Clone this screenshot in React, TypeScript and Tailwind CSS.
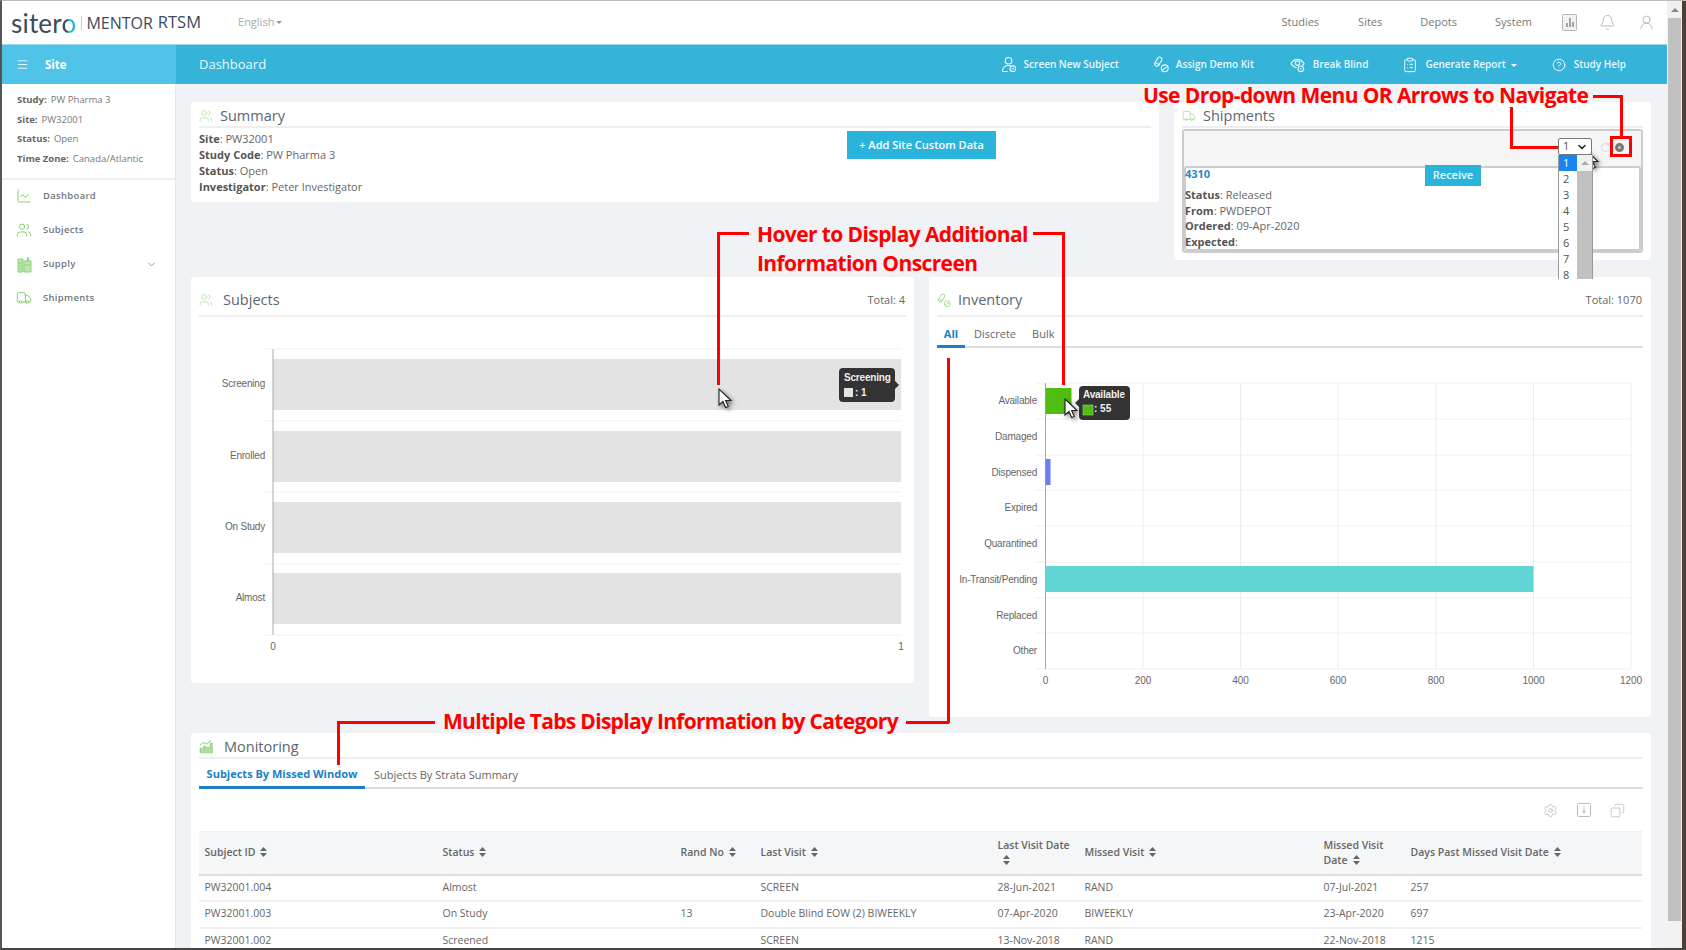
import { Bell, ChartLine, ChevronDown, CircleHelp, ClipboardList, Copy, Menu, Settings, Truck, UserRound, Users } from "lucide-react";

const NAV_TOP = [
  { label: "Studies", cls: "ml-0" },
  { label: "Sites", cls: "ml-[39px]" },
  { label: "Depots", cls: "ml-[38px]" },
  { label: "System", cls: "ml-[38px]" },
];

const SIDE_INFO = [
  ["Study:", "PW Pharma 3"],
  ["Site:", "PW32001"],
  ["Status:", "Open"],
  ["Time Zone:", "Canada/Atlantic"],
];

const SUMMARY = [
  ["Site", "PW32001"],
  ["Study Code", "PW Pharma 3"],
  ["Status", "Open"],
  ["Investigator", "Peter Investigator"],
];

const SHIPMENT = [
  ["Status", "Released"],
  ["From", "PWDEPOT"],
  ["Ordered", "09-Apr-2020"],
  ["Expected", ""],
];

const COLUMNS = [
  { label: "Subject ID", width: "w-[238px]" },
  { label: "Status", width: "w-[238px]" },
  { label: "Rand No", width: "w-[80px]" },
  { label: "Last Visit", width: "w-[237px]" },
  { label: "Last Visit Date", width: "w-[87px]" },
  { label: "Missed Visit", width: "w-[239px]" },
  { label: "Missed Visit Date", width: "w-[87px]" },
  { label: "Days Past Missed Visit Date", width: "w-[237px]" },
];

const ROWS = [
  ["PW32001.004", "Almost", "", "SCREEN", "28-Jun-2021", "RAND", "07-Jul-2021", "257"],
  ["PW32001.003", "On Study", "13", "Double Blind EOW (2) BIWEEKLY", "07-Apr-2020", "BIWEEKLY", "23-Apr-2020", "697"],
  ["PW32001.002", "Screened", "", "SCREEN", "13-Nov-2018", "RAND", "22-Nov-2018", "1215"],
];

const SUBJECT_ROWS = [
  { label: "Screening", top: 359 },
  { label: "Enrolled", top: 431 },
  { label: "On Study", top: 502 },
  { label: "Almost", top: 573 },
];

const INVENTORY_LABELS = ["Available", "Damaged", "Dispensed", "Expired", "Quarantined", "In-Transit/Pending", "Replaced", "Other"];

function SupplyIcon() {
  return (
    <svg width="15" height="17" viewBox="0 0 15 17" className="shrink-0">
      <path d="M1 3h5v13H1zM7 5h7v11H7z" fill="#bfe6b0" stroke="#8ed279" />
      <path d="M10 5l1-4 1 4M2 7h3M2 10h3M2 13h3M8 9h5" stroke="#8ed279" fill="none" />
    </svg>
  );
}

function ReportIcon() {
  return (
    <svg width="15" height="17" viewBox="0 0 15 17">
      <rect x="0.5" y="0.5" width="14" height="16" rx="1" fill="#f1f1f1" stroke="#b5b5b5" />
      <path d="M4 13V9h2v4zM7 13V4h2v9zM10 13V8h2v5z" fill="#a5a5a5" />
    </svg>
  );
}

function BarsIcon() {
  return (
    <svg width="14" height="14" viewBox="0 0 14 14">
      <path d="M1 13V8h2.4v5zM4.4 13V6h2.4v7zM7.8 13V7h2.4v6zM11 13V3h2.4v10z" fill="#a9d99a" stroke="#8ec97c" strokeWidth="0.5" />
      <path d="M1 5l3.5-2.5L7.5 4 12 0.8" stroke="#8ec97c" fill="none" />
    </svg>
  );
}

function SubjectBadgeIcon() {
  return (
    <svg width="17" height="17" viewBox="0 0 17 17" fill="none" stroke="currentColor" strokeWidth="1.2">
      <circle cx="8" cy="4.5" r="3.5" />
      <path d="M7 16H2.5c-.8 0-1.2-.5-1-1.3C2.2 11.5 4.5 9.5 8 9.5c1.3 0 2.4.3 3.3.8" />
      <circle cx="12.5" cy="13" r="3" />
      <path d="M11.2 13h2.6" />
    </svg>
  );
}

function KitIcon({ size, className }: { size: number; className?: string }) {
  return (
    <svg width={size} height={size} viewBox="0 0 17 17" fill="none" stroke="currentColor" strokeWidth="1.2" className={className}>
      <rect x="3.2" y="0.2" width="4.6" height="10.5" rx="2.3" transform="rotate(32 5.5 5.5)" />
      <path d="M3 6.6l4.4 2.7" />
      <circle cx="12.5" cy="12.5" r="3.6" />
      <path d="M10.2 14l4.6-3" />
    </svg>
  );
}

function BlindIcon() {
  return (
    <svg width="17" height="16" viewBox="0 0 17 16" fill="none" stroke="currentColor" strokeWidth="1.2">
      <path d="M1 6.5C3 3.5 5.5 2 8 2s5 1.5 7 4.5c-.6.9-1.3 1.7-2 2.3" />
      <path d="M1 6.5c1.6 2.4 3.6 3.9 6 4.4" />
      <circle cx="8" cy="6" r="2.4" />
      <circle cx="11.5" cy="12" r="3" />
      <path d="M10.4 12h2.2" />
    </svg>
  );
}

function SortIcon() {
  return (
    <svg width="7" height="10" viewBox="0 0 7 10" className="ml-[5px] inline-block align-[-1px]">
      <path d="M3.5 0L7 4H0zM3.5 10L0 6h7z" fill="#666" />
    </svg>
  );
}

function Cursor({ className }: { className: string }) {
  return (
    <svg width="15" height="22" viewBox="0 0 15 22" className={`absolute drop-shadow-[2px_2px_2px_rgba(0,0,0,0.5)] ${className}`}>
      <path d="M1 1v16l4-3.5 2.6 6 2.6-1.1-2.6-5.9H13z" fill="#fff" stroke="#222" strokeWidth="1.1" />
    </svg>
  );
}

function BarItem({ icon, label, caret, className }: { icon: React.ReactNode; label: string; caret?: boolean; className: string }) {
  return (
    <div className={`flex items-center text-[10px] font-semibold text-[#e9f8fd] ${className}`}>
      <span className="mr-[7px] flex w-[16px] justify-center">{icon}</span>
      {label}
      {caret && <span className="ml-[5px] mt-[2px] border-x-[3px] border-t-[3px] border-x-transparent border-t-white" />}
    </div>
  );
}

function PanelHeading({ icon, title, gap }: { icon: React.ReactNode; title: string; gap: string }) {
  return (
    <div className="flex items-center">
      <span className="flex w-[14px] justify-center">{icon}</span>
      <span className={`text-[14.5px] leading-[20px] text-[#5c6670] ${gap}`}>{title}</span>
    </div>
  );
}

function SubjectsChart() {
  return (
    <svg width="723" height="366" viewBox="191 317 723 366" className="block font-['Liberation_Sans',sans-serif]">
      {[349, 421, 492, 564, 635].map((y) => (
        <line key={y} x1="264" x2="901" y1={y} y2={y} stroke="#f1f1f1" />
      ))}
      {SUBJECT_ROWS.map((row) => (
        <g key={row.label}>
          <rect x="273" y={row.top} width="628" height="51" fill="#e3e3e3" />
          <text x="265" y={row.top + 28} textAnchor="end" fontSize="10" letterSpacing="-0.2" fill="#666">{row.label}</text>
        </g>
      ))}
      <line x1="273" x2="273" y1="349" y2="635" stroke="#aaa" />
      <text x="273" y="650" textAnchor="middle" fontSize="10" fill="#666">0</text>
      <text x="901" y="650" textAnchor="middle" fontSize="10" fill="#666">1</text>
      <rect x="839" y="368" width="56" height="34" rx="4" fill="#333" />
      <path d="M895 381l4 4-4 4z" fill="#333" />
      <text x="844" y="381" fontSize="10" letterSpacing="-0.2" fontWeight="700" fill="#eee">Screening</text>
      <rect x="844" y="388" width="9" height="9" fill="#e3e3e3" />
      <text x="855" y="396" fontSize="10" fontWeight="700" fill="#eee">: 1</text>
    </svg>
  );
}

function InventoryChart() {
  const rowY = [383, 419, 455, 490, 526, 562, 598, 633, 669];
  const tickX = [1045.5, 1143, 1240.6, 1338, 1436, 1533.5, 1631];
  return (
    <svg width="722" height="369" viewBox="929 348 722 369" className="block font-['Liberation_Sans',sans-serif]">
      {rowY.map((y) => (
        <line key={y} x1="1036" x2="1631" y1={y} y2={y} stroke="#f0f0f0" />
      ))}
      {tickX.map((x, i) => (
        <g key={x}>
          <line x1={x} x2={x} y1="383" y2="669" stroke={i === 0 ? "#aaa" : "#ececec"} />
          <text x={x} y="684" textAnchor="middle" fontSize="10" fill="#666">{i * 200}</text>
        </g>
      ))}
      {INVENTORY_LABELS.map((label, i) => (
        <text key={label} x="1037" y={rowY[i] + 21} textAnchor="end" fontSize="10" letterSpacing="-0.2" fill="#666">{label}</text>
      ))}
      <rect x="1045.5" y="388" width="26" height="26" fill="#4fbe10" />
      <rect x="1045.5" y="459" width="5" height="26" fill="#6b7ef0" />
      <rect x="1045.5" y="566" width="488" height="26" fill="#62d5d5" />
      <rect x="1079" y="386" width="51" height="34" rx="4" fill="#333" />
      <path d="M1079 399l-4 4 4 4z" fill="#333" />
      <text x="1083" y="398" fontSize="10" letterSpacing="-0.2" fontWeight="700" fill="#eee">Available</text>
      <rect x="1083" y="405" width="10" height="10" fill="#4fbe10" stroke="#8be060" strokeWidth="0.6" />
      <text x="1094" y="412" fontSize="10" fontWeight="700" fill="#eee">: 55</text>
    </svg>
  );
}

function Annotations() {
  return (
    <div className="pointer-events-none absolute -left-[2px] -top-[1px] h-[950px] w-[1686px] font-['Open_Sans',sans-serif] text-[21px] font-bold tracking-[-0.6px] text-[#f00]">
      <span className="absolute left-[1143px] top-[80px] whitespace-nowrap">Use Drop-down Menu OR Arrows to Navigate</span>
      <div className="absolute left-[1593px] top-[95px] h-[2.5px] w-[29px] bg-[#f00]" />
      <div className="absolute left-[1620px] top-[95px] h-[41px] w-[2.5px] bg-[#f00]" />
      <div className="absolute left-[1610px] top-[136px] h-[21px] w-[22px] border-[3px] border-[#f00]" />
      <div className="absolute left-[1510px] top-[107px] h-[41px] w-[2.5px] bg-[#f00]" />
      <div className="absolute left-[1510px] top-[146px] h-[2.5px] w-[48px] bg-[#f00]" />

      <span className="absolute left-[757px] top-[219px] whitespace-nowrap">Hover to Display Additional</span>
      <span className="absolute left-[757px] top-[248px] whitespace-nowrap">Information Onscreen</span>
      <div className="absolute left-[717px] top-[232px] h-[2.5px] w-[32px] bg-[#f00]" />
      <div className="absolute left-[717px] top-[232px] h-[153px] w-[2.5px] bg-[#f00]" />
      <div className="absolute left-[1033px] top-[232px] h-[2.5px] w-[31px] bg-[#f00]" />
      <div className="absolute left-[1062px] top-[232px] h-[153px] w-[2.5px] bg-[#f00]" />

      <span className="absolute left-[443px] top-[706px] whitespace-nowrap tracking-[-0.7px]">Multiple Tabs Display Information by Category</span>
      <div className="absolute left-[338px] top-[721px] h-[2.5px] w-[97px] bg-[#f00]" />
      <div className="absolute left-[337px] top-[721px] h-[44px] w-[2.5px] bg-[#f00]" />
      <div className="absolute left-[906px] top-[721px] h-[2.5px] w-[43px] bg-[#f00]" />
      <div className="absolute left-[947px] top-[358px] h-[365px] w-[2.5px] bg-[#f00]" />

      <Cursor className="left-[718px] top-[388px]" />
      <Cursor className="left-[1064px] top-[398px]" />
      <Cursor className="left-[1585px] top-[149px]" />
    </div>
  );
}

export default function App() {
  return (
    <div className="relative flex h-[950px] w-[1686px] overflow-hidden border-t border-b-2 border-l-2 border-t-[#bbb] border-b-[#444] border-l-[#555] bg-[#f0f2f5] font-['Open_Sans',sans-serif]">
      <div className="flex min-w-0 flex-1 flex-col">
        {/* Top header */}
        <header className="flex h-[44px] shrink-0 items-center border-b border-b-[#9ed7ea] bg-white pl-[9px]">
          <span className="font-['Lato',sans-serif] text-[26px] leading-none tracking-[0.2px] text-[#3d4b5c]">
            siter
            <span className="bg-[linear-gradient(90deg,#3d4b5c_45%,#2ab4dc_45%)] bg-clip-text text-transparent">o</span>
          </span>
          <span className="ml-[5px] h-[14px] w-px bg-[#ccc]" />
          <span className="ml-[4px] text-[16px] font-medium text-[#3d4b5c]">MENTOR</span>
          <span className="ml-[5px] text-[16.5px] text-[#3d4b5c]">RTSM</span>
          <span className="ml-[37px] flex items-center text-[11px] text-[#aaa]">
            English
            <span className="ml-[2px] border-x-[3px] border-t-[3px] border-x-transparent border-t-[#999]" />
          </span>
          <nav className="ml-auto flex items-center text-[11px] text-[#777]">
            {NAV_TOP.map((item) => (
              <span key={item.label} className={item.cls}>{item.label}</span>
            ))}
          </nav>
          <div className="ml-[30px] mr-[12px] flex items-center gap-[22px] text-[#b5b5b5]">
            <ReportIcon />
            <Bell size={17} strokeWidth={1.3} />
            <UserRound size={17} strokeWidth={1.3} />
          </div>
        </header>

        {/* Blue bar */}
        <div className="flex h-[39px] shrink-0 bg-[#35b3d8] text-white">
          <div className="flex w-[174px] shrink-0 items-center bg-[#4fc3e8] pl-[14px]">
            <Menu size={13} strokeWidth={2} className="text-[#dff5fc]" />
            <span className="ml-[16px] text-[11.5px] font-bold">Site</span>
          </div>
          <span className="ml-[23px] self-center text-[13px] text-[#e9f8fd]">Dashboard</span>
          <div className="ml-auto flex items-center pr-[41px]">
            <BarItem icon={<SubjectBadgeIcon />} label="Screen New Subject" className="mr-[34px]" />
            <BarItem icon={<KitIcon size={17} />} label="Assign Demo Kit" className="mr-[36px]" />
            <BarItem icon={<BlindIcon />} label="Break Blind" className="mr-[34px]" />
            <BarItem icon={<ClipboardList size={16} strokeWidth={1.5} />} label="Generate Report" caret className="mr-[34px]" />
            <BarItem icon={<CircleHelp size={14} strokeWidth={1.7} />} label="Study Help" className="" />
          </div>
        </div>

        <div className="flex min-h-0 flex-1">
          {/* Sidebar */}
          <aside className="w-[174px] shrink-0 border-r border-r-[#e8e8e8] bg-white">
            <div className="flex h-[96px] flex-col gap-[5px] border-b-2 border-b-[#eee] pl-[15px] pt-[9px] text-[9.5px] leading-[14.5px] text-[#777]">
              {SIDE_INFO.map(([label, value]) => (
                <div key={label}>
                  <span className="mr-[4px] font-bold text-[#666]">{label}</span>
                  {value}
                </div>
              ))}
            </div>
            <nav className="-mt-px pl-[14px] pr-[18px] text-[9.5px] font-semibold tracking-[0.3px] text-[#6f7780]">
              <div className="flex h-[34px] items-center gap-[11px]">
                <ChartLine size={16} strokeWidth={1.4} className="text-[#7fcb68]" />
                Dashboard
              </div>
              <div className="flex h-[34px] items-center gap-[11px]">
                <Users size={16} strokeWidth={1.4} className="text-[#7fcb68]" />
                Subjects
              </div>
              <div className="flex h-[34px] items-center gap-[11px]">
                <span className="flex w-[16px] justify-center"><SupplyIcon /></span>
                Supply
                <ChevronDown size={11} strokeWidth={2} className="ml-auto text-[#888]" />
              </div>
              <div className="flex h-[34px] items-center gap-[11px]">
                <Truck size={16} strokeWidth={1.4} className="text-[#7fcb68]" />
                Shipments
              </div>
            </nav>
          </aside>

          {/* Content */}
          <main className="min-w-0 flex-1 overflow-hidden pl-[15px] text-[11px] text-[#666]">
            <div className="flex h-[193px] items-start pt-[18px]">
              {/* Summary */}
              <section className="h-[100px] w-[968px] rounded-[3px] bg-white px-[8px]">
                <div className="flex h-[26px] items-end border-b-2 border-b-[#eee]">
                  <PanelHeading icon={<Users size={14} strokeWidth={1.2} className="text-[#a9d99a]" />} title="Summary" gap="ml-[7px]" />
                </div>
                <div className="relative">
                  <div className="pt-[3px] text-[11px] leading-[16px]">
                    {SUMMARY.map(([label, value]) => (
                      <div key={label}>
                        <b className="font-bold text-[#555]">{label}</b>: {value}
                      </div>
                    ))}
                  </div>
                  <button className="absolute left-[648px] top-[3px] flex h-[28px] w-[149px] items-center justify-center bg-[#2ab4dc] text-[11px] font-semibold text-white">
                    + Add Site Custom Data
                  </button>
                </div>
              </section>

              {/* Shipments */}
              <section className="relative ml-[15px] h-[158px] w-[477px] rounded-[3px] bg-white px-[8px]">
                <div className="flex h-[26px] items-end border-b-2 border-b-[#eee]">
                  <PanelHeading icon={<Truck size={14} strokeWidth={1.3} className="text-[#a9d99a]" />} title="Shipments" gap="ml-[7px]" />
                </div>
                <div className="mt-[1px] h-[124px] rounded-[3px] border-2 border-[#ccc] bg-[#f5f5f5]">
                  <div className="relative h-[35px]">
                    <span className="absolute left-[417px] top-[12px] size-[9px] rounded-full border border-[#ddd]" />
                    <span className="absolute left-[431px] top-[12px] size-[9px] rounded-full border-[3px] border-[#777] bg-[#ccc]" />
                  </div>
                  <div className="relative h-[85px] rounded-[3px] border-2 border-[#ccc] bg-white">
                    <div className="-ml-px -mt-[2px] text-[11px] font-bold leading-[16px] text-[#2a87c8]">4310</div>
                    <div className="-ml-px pt-[5px] leading-[15.7px]">
                      {SHIPMENT.map(([label, value]) => (
                        <div key={label}>
                          <b className="font-bold text-[#555]">{label}</b>: {value}
                        </div>
                      ))}
                    </div>
                    <button className="absolute left-[239px] top-[-3px] flex h-[21px] w-[56px] items-center justify-center bg-[#2ab4dc] text-[11px] font-semibold text-[#e9f8fd]">
                      Receive
                    </button>
                  </div>
                </div>
                {/* Open select */}
                <div className="absolute left-[384px] top-[36px] z-10 flex h-[17px] w-[34px] items-center justify-between rounded-[2px] border border-[#777] bg-white pl-[4px] pr-[3px] text-[11px] text-[#555]">
                  1
                  <ChevronDown size={12} strokeWidth={3} className="text-[#222]" />
                </div>
                <div className="absolute left-[384px] top-[53px] z-10 flex h-[124px] w-[35px] overflow-hidden border-x border-x-[#999] bg-white text-[11px] leading-[16px] text-[#555]">
                  <div className="w-[18px]">
                    {[1, 2, 3, 4, 5, 6, 7, 8].map((n) => (
                      <div key={n} className={n === 1 ? "h-[16px] bg-[#1a84f0] pl-[4px] text-white" : "h-[16px] pl-[4px]"}>{n}</div>
                    ))}
                  </div>
                  <div className="flex-1 bg-[#f1f1f1]">
                    <div className="flex h-[16px] items-center justify-center">
                      <span className="border-x-[4px] border-b-[4px] border-x-transparent border-b-[#aaa]" />
                    </div>
                    <div className="h-full bg-[#c1c1c1]" />
                  </div>
                </div>
              </section>
            </div>

            <div className="flex h-[456px] items-start">
              {/* Subjects */}
              <section className="h-[406px] w-[723px] rounded-[3px] bg-white">
                <div className="mx-[8px] flex h-[40px] items-center justify-between border-b-2 border-b-[#eee] pr-[1px] pt-[8px]">
                  <PanelHeading icon={<Users size={14} strokeWidth={1.2} className="text-[#a9d99a]" />} title="Subjects" gap="ml-[10px]" />
                  <span className="text-[11px]">Total: 4</span>
                </div>
                <SubjectsChart />
              </section>

              {/* Inventory */}
              <section className="ml-[15px] h-[440px] w-[722px] rounded-[3px] bg-white">
                <div className="mx-[8px] flex h-[40px] items-center justify-between border-b-2 border-b-[#eee] pr-[1px] pt-[8px]">
                  <PanelHeading icon={<KitIcon size={15} className="text-[#a9d99a]" />} title="Inventory" gap="ml-[7px]" />
                  <span className="text-[11px]">Total: 1070</span>
                </div>
                <div className="mx-[8px] flex h-[31px] items-end border-b-2 border-b-[#ddd] text-[11px]">
                  <span className="mb-[-2px] flex h-[30px] w-[28px] items-center justify-center border-b-[3px] border-b-[#1b7fc4] pt-[5px] font-bold text-[#1b7fc4]">All</span>
                  <span className="mb-[4px] ml-[9px]">Discrete</span>
                  <span className="mb-[4px] ml-[16px]">Bulk</span>
                </div>
                <InventoryChart />
              </section>
            </div>

            {/* Monitoring */}
            <section className="h-[215px] w-[1460px] overflow-hidden rounded-t-[3px] bg-white px-[8px]">
              <div className="flex h-[26px] items-end border-b-2 border-b-[#eee]">
                <PanelHeading icon={<BarsIcon />} title="Monitoring" gap="ml-[11px]" />
              </div>
              <div className="flex h-[30px] items-end border-b-2 border-b-[#ddd] text-[11px]">
                <span className="mb-[-2px] flex h-[29px] w-[166px] items-center justify-center border-b-[3px] border-b-[#1b7fc4] pt-[2px] font-bold text-[#1b7fc4]">Subjects By Missed Window</span>
                <span className="mb-[4px] ml-[9px]">Subjects By Strata Summary</span>
              </div>
              <div className="flex h-[42px] items-center justify-end gap-[19px] pr-[18px] text-[#bbb]">
                <Settings size={15} strokeWidth={1.3} />
                <svg width="14" height="14" viewBox="0 0 14 14" fill="none" stroke="#bbb">
                  <rect x="0.5" y="0.5" width="13" height="13" rx="1" />
                  <path d="M7 3.5v6.5M5 8l2 2 2-2" />
                </svg>
                <Copy size={15} strokeWidth={1.3} className="-scale-x-100" />
              </div>
              <table className="w-[1443px] table-fixed border-t border-t-[#eee] text-left text-[10.5px]">
                <colgroup>
                  {COLUMNS.map((col) => (
                    <col key={col.label} className={col.width} />
                  ))}
                </colgroup>
                <thead className="bg-[#f5f6f8]">
                  <tr className="h-[43px] border-b-2 border-b-[#ddd]">
                    {COLUMNS.map((col) => (
                      <th key={col.label} className="pl-[5.5px] font-semibold leading-[15px] text-[#666]">
                        {col.label}
                        <SortIcon />
                      </th>
                    ))}
                  </tr>
                </thead>
                <tbody>
                  {ROWS.map((row) => (
                    <tr key={row[0]} className="h-[26.5px] border-b-2 border-b-[#f1f1f1]">
                      {row.map((cell, i) => (
                        <td key={i} className="pl-[5.5px]">{cell}</td>
                      ))}
                    </tr>
                  ))}
                </tbody>
              </table>
            </section>
          </main>
        </div>
      </div>

      {/* Scrollbar */}
      <div className="flex w-[19px] shrink-0 flex-col border-r-[4px] border-r-[#4a4238] bg-[#f1f1f1]">
        <div className="flex h-[17px] items-center justify-center">
          <span className="border-x-[4px] border-b-[4px] border-x-transparent border-b-[#888]" />
        </div>
        <div className="mx-px h-[903px] bg-[#c1c1c1]" />
      </div>

      <Annotations />
    </div>
  );
}
